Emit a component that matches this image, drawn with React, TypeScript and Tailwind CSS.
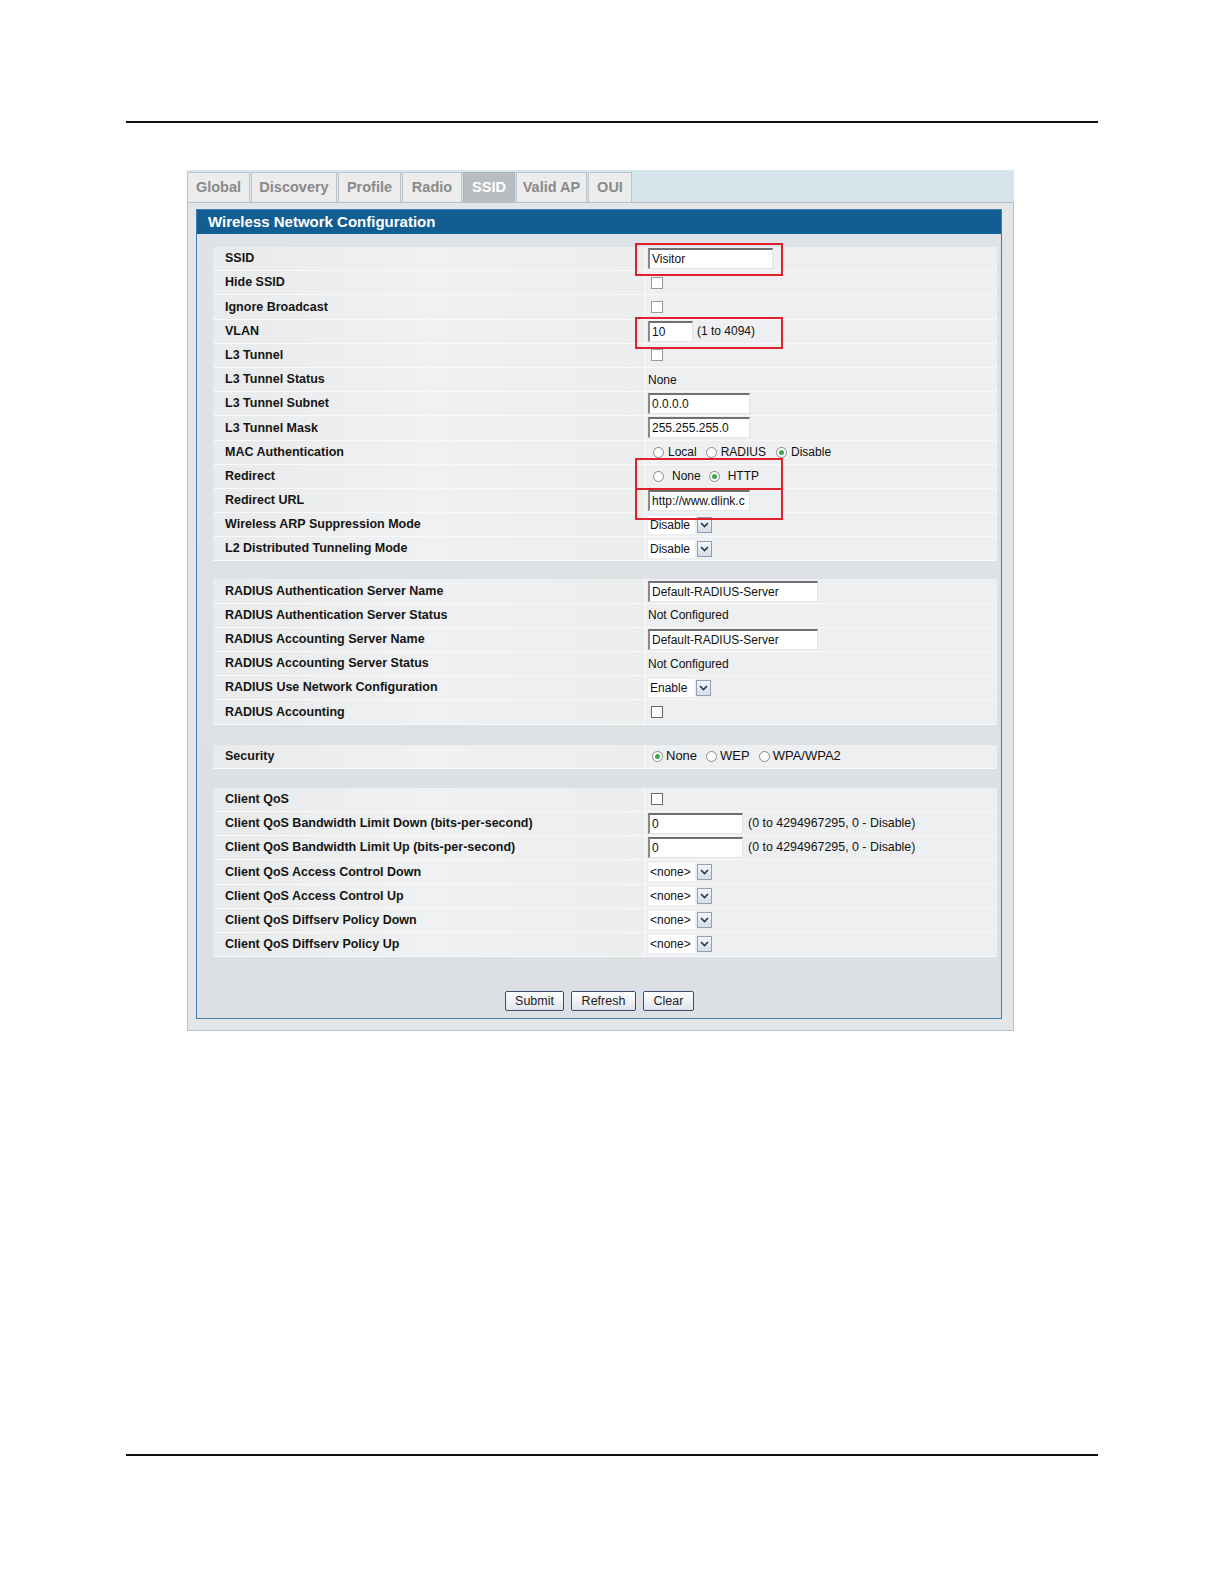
import type { ReactNode } from "react";

type Row = { label: string; value: ReactNode };

function TextBox({ value, w }: { value: string; w: number }) {
  return (
    <span
      className="inline-flex h-[21px] items-center bg-white pl-[2px] text-[12px] text-[#111] border-t-2 border-l-2 border-t-[#6f6f6f] border-l-[#8a8a8a] border-b border-r border-b-[#e4e4e4] border-r-[#e4e4e4] overflow-hidden whitespace-nowrap"
      style={{ width: w }}
    >
      {value}
    </span>
  );
}

function Check({ faint = false }: { faint?: boolean }) {
  return (
    <span
      className={`ml-[3px] inline-block h-[12px] w-[12px] border bg-white ${
        faint ? "border-[#9a9a9a] bg-[#f4f4f4]" : "border-[#6a6a6a]"
      }`}
    />
  );
}

function Radio({
  label,
  checked = false,
  gap = 4,
  space = 10,
  size = 12,
}: {
  label: string;
  checked?: boolean;
  gap?: number;
  space?: number;
  size?: number;
}) {
  return (
    <span className="inline-flex items-center text-[#111]" style={{ marginRight: space, fontSize: size }}>
      <span className="relative inline-flex h-[11px] w-[11px] items-center justify-center rounded-full border border-[#8a8a8a] bg-white">
        {checked && <span className="h-[5px] w-[5px] rounded-full bg-[#3fa64b]" />}
      </span>
      <span style={{ marginLeft: gap }}>{label}</span>
    </span>
  );
}

function Select({ value, w }: { value: string; w: number }) {
  return (
    <span className="inline-flex items-center">
      <span className="inline-flex h-[18px] items-center bg-white pl-[2px] text-[12px] text-[#111]" style={{ width: w }}>
        {value}
      </span>
      <span className="ml-[2px] inline-flex h-[16px] w-[15px] items-center justify-center border border-[#8e9fb6] bg-gradient-to-b from-[#f6f8fb] to-[#d5dce7]">
        <svg width="9" height="6" viewBox="0 0 9 6">
          <path d="M1 1l3.5 3.5L8 1" fill="none" stroke="#1f3658" strokeWidth="1.6" />
        </svg>
      </span>
    </span>
  );
}

const note = (t: string, ml: number, size = 12) => (
  <span className="text-[#111]" style={{ marginLeft: ml, fontSize: size }}>
    {t}
  </span>
);

const section1: Row[] = [
  { label: "SSID", value: <TextBox value="Visitor" w={125} /> },
  { label: "Hide SSID", value: <Check faint /> },
  { label: "Ignore Broadcast", value: <Check faint /> },
  { label: "VLAN", value: <><TextBox value="10" w={45} />{note("(1 to 4094)", 4)}</> },
  { label: "L3 Tunnel", value: <Check faint /> },
  { label: "L3 Tunnel Status", value: <span className="text-[12px] text-[#111]">None</span> },
  { label: "L3 Tunnel Subnet", value: <TextBox value="0.0.0.0" w={102} /> },
  { label: "L3 Tunnel Mask", value: <TextBox value="255.255.255.0" w={102} /> },
  {
    label: "MAC Authentication",
    value: (
      <span className="ml-[5px] inline-flex">
        <Radio label="Local" gap={4} space={9} />
        <Radio label="RADIUS" gap={4} space={10} />
        <Radio label="Disable" checked gap={4} />
      </span>
    ),
  },
  {
    label: "Redirect",
    value: (
      <span className="ml-[5px] inline-flex">
        <Radio label="None" gap={8} space={8} />
        <Radio label="HTTP" checked gap={8} />
      </span>
    ),
  },
  { label: "Redirect URL", value: <TextBox value="http://www.dlink.c" w={102} /> },
  { label: "Wireless ARP Suppression Mode", value: <Select value="Disable" w={47} /> },
  { label: "L2 Distributed Tunneling Mode", value: <Select value="Disable" w={47} /> },
];

const section2: Row[] = [
  { label: "RADIUS Authentication Server Name", value: <TextBox value="Default-RADIUS-Server" w={170} /> },
  { label: "RADIUS Authentication Server Status", value: <span className="text-[12px] text-[#111]">Not Configured</span> },
  { label: "RADIUS Accounting Server Name", value: <TextBox value="Default-RADIUS-Server" w={170} /> },
  { label: "RADIUS Accounting Server Status", value: <span className="text-[12px] text-[#111]">Not Configured</span> },
  { label: "RADIUS Use Network Configuration", value: <Select value="Enable" w={46} /> },
  { label: "RADIUS Accounting", value: <Check /> },
];

const section3: Row[] = [
  {
    label: "Security",
    value: (
      <span className="ml-[4px] inline-flex">
        <Radio label="None" checked gap={3} space={9} size={13} />
        <Radio label="WEP" gap={3} space={9} size={13} />
        <Radio label="WPA/WPA2" gap={3} size={13} />
      </span>
    ),
  },
];

const section4: Row[] = [
  { label: "Client QoS", value: <Check /> },
  {
    label: "Client QoS Bandwidth Limit Down (bits-per-second)",
    value: <><TextBox value="0" w={95} />{note("(0 to 4294967295, 0 - Disable)", 5, 12.4)}</>,
  },
  {
    label: "Client QoS Bandwidth Limit Up (bits-per-second)",
    value: <><TextBox value="0" w={95} />{note("(0 to 4294967295, 0 - Disable)", 5, 12.4)}</>,
  },
  { label: "Client QoS Access Control Down", value: <Select value="<none>" w={47} /> },
  { label: "Client QoS Access Control Up", value: <Select value="<none>" w={47} /> },
  { label: "Client QoS Diffserv Policy Down", value: <Select value="<none>" w={47} /> },
  { label: "Client QoS Diffserv Policy Up", value: <Select value="<none>" w={47} /> },
];

function Section({ rows }: { rows: Row[] }) {
  return (
    <div className="flex flex-col">
      {rows.map((r) => (
        <div key={r.label} className="grid h-[24.2px] grid-cols-[431px_1fr] border-b border-[#f7f8f9]">
          <div className="flex items-center bg-gradient-to-r from-[#e9eaeb] via-[#f0f1f2] to-[#eceded] pl-[12px] text-[12.5px] font-bold text-[#151515] whitespace-nowrap">
            {r.label}
          </div>
          <div className="flex items-center border-l border-[#fbfbfb] bg-[#eeeff0] pl-[3px]">{r.value}</div>
        </div>
      ))}
    </div>
  );
}

const tabs = [
  { name: "Global", w: 63 },
  { name: "Discovery", w: 86 },
  { name: "Profile", w: 63 },
  { name: "Radio", w: 60 },
  { name: "SSID", w: 52, active: true },
  { name: "Valid AP", w: 71 },
  { name: "OUI", w: 44 },
];

function Button({ label, w }: { label: string; w: number }) {
  return (
    <button
      className="h-[20px] rounded-[2px] border border-[#3b4f6b] bg-gradient-to-b from-white to-[#dfe3ec] text-[12.5px] text-[#222]"
      style={{ width: w }}
    >
      {label}
    </button>
  );
}

export default function App() {
  return (
    <div className="relative h-[1584px] w-[1224px] bg-white font-['Liberation_Sans',Arial,sans-serif]">
      <div className="pt-[121px]">
        <div className="ml-[126px] h-[2px] w-[972px] bg-[#111]" />
      </div>

      <div className="ml-[187px] mt-[47px] w-[827px]">
        {/* tab strip */}
        <div className="flex h-[32px] items-end gap-[1px] bg-[#d6e4ec]">
          {tabs.map((t) => (
            <div
              key={t.name}
              className={`flex h-[30px] items-center justify-center border border-b-0 text-[14.5px] font-bold ${
                t.active ? "border-[#a9b0b6] bg-[#b8bdc2] text-white" : "border-[#bcc5cb] bg-[#ececec] text-[#8a8a8a]"
              }`}
              style={{ width: t.w }}
            >
              {t.name}
            </div>
          ))}
        </div>

        {/* outer panel */}
        <div className="border border-[#b9c2c9] bg-[#e3e6e9] pb-[11px] pl-[8px] pr-[11px] pt-[6px]">
          <div className="border border-[#3d82b3] bg-gradient-to-b from-[#dfe2e6] to-[#dce0e4]">
            <div className="flex h-[24px] items-center bg-[#125e92] pl-[11px] text-[15px] font-bold text-white">
              Wireless Network Configuration
            </div>
            <div className="pl-[16px] pr-[4px] pt-[13px]">
              <Section rows={section1} />
              <div className="h-[18px]" />
              <Section rows={section2} />
              <div className="h-[20px]" />
              <Section rows={section3} />
              <div className="h-[19px]" />
              <Section rows={section4} />
              <div className="flex justify-center gap-[7px] pb-[7px] pr-[11px] pt-[34px]">
                <Button label="Submit" w={59} />
                <Button label="Refresh" w={65} />
                <Button label="Clear" w={51} />
              </div>
            </div>
          </div>
        </div>
      </div>

      {/* red highlight annotations */}
      <div className="absolute left-[635px] top-[243px] h-[33px] w-[148px] border-2 border-[#e0212b]" />
      <div className="absolute left-[635px] top-[317px] h-[32px] w-[148px] border-2 border-[#e0212b]" />
      <div className="absolute left-[635px] top-[458px] h-[32px] w-[148px] border-2 border-[#e0212b]" />
      <div className="absolute left-[635px] top-[488px] h-[32px] w-[148px] border-2 border-[#e0212b]" />

      <div className="absolute left-[126px] top-[1454px] h-[2px] w-[972px] bg-[#111]" />
    </div>
  );
}
